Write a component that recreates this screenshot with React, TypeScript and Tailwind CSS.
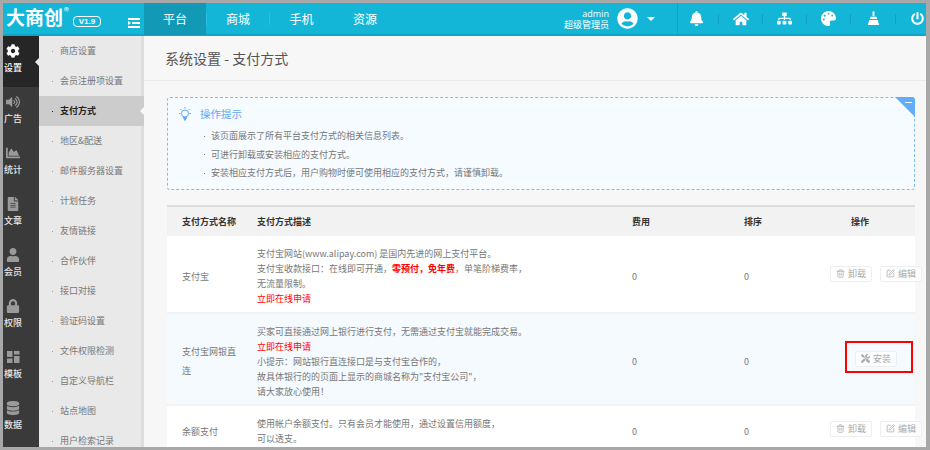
import {
  FaBell,
  FaChartArea,
  FaCog,
  FaDatabase,
  FaFileAlt,
  FaHome,
  FaLock,
  FaPalette,
  FaPowerOff,
  FaSitemap,
  FaTools,
  FaUser,
  FaUserCircle,
  FaVolumeUp,
} from "react-icons/fa";
import { SquarePen, Trash2 } from "lucide-react";
import type { ComponentType, ReactNode } from "react";

function TemplateIcon({ className }: { className?: string }) {
  return (
    <svg viewBox="0 0 14 14" className={`fill-current ${className ?? ""}`}>
      <rect x="1" y="1" width="5.5" height="6" />
      <rect x="8" y="1" width="5.5" height="3.5" />
      <rect x="8" y="6" width="5.5" height="7" />
      <rect x="1" y="8.5" width="5.5" height="4.5" />
    </svg>
  );
}

const sideItems: { label: string; icon: ComponentType<{ className?: string }> }[] = [
  { label: "设置", icon: FaCog },
  { label: "广告", icon: FaVolumeUp },
  { label: "统计", icon: FaChartArea },
  { label: "文章", icon: FaFileAlt },
  { label: "会员", icon: FaUser },
  { label: "权限", icon: FaLock },
  { label: "模板", icon: TemplateIcon },
  { label: "数据", icon: FaDatabase },
];

const subItems = [
  "商店设置",
  "会员注册项设置",
  "支付方式",
  "地区&配送",
  "邮件服务器设置",
  "计划任务",
  "友情链接",
  "合作伙伴",
  "接口对接",
  "验证码设置",
  "文件权限检测",
  "自定义导航栏",
  "站点地图",
  "用户检索记录",
];

const tips = [
  "该页面展示了所有平台支付方式的相关信息列表。",
  "可进行卸载或安装相应的支付方式。",
  "安装相应支付方式后，用户购物时便可使用相应的支付方式，请谨慎卸载。",
];

function Broom() {
  return (
    <svg viewBox="0 0 16 16" className="h-[15px] w-[15px] fill-white">
      <rect x="7" y="0.5" width="2" height="5" />
      <path d="M5 6h6l1 2.5H4z" />
      <path d="M3.5 9.5h9l1.5 5.5H2z" />
    </svg>
  );
}

function TipBulb() {
  return (
    <svg viewBox="0 0 16 16" fill="none" stroke="#62a8f2" strokeWidth="1" className="h-[16px] w-[16px] shrink-0">
      <circle cx="8" cy="7.5" r="3.5" />
      <path d="M8 1v1.5M2 7.5h1.5M12.5 7.5H14M3.6 3.1l1.1 1.1M12.4 3.1l-1.1 1.1" />
      <path d="M6.3 11.5h3.4L8 14.5z" fill="#62a8f2" />
    </svg>
  );
}

function ActionButton({ icon, label }: { icon: ReactNode; label: string }) {
  return (
    <span className="flex h-[16px] w-[42px] shrink-0 items-center justify-center gap-[3px] rounded-[2px] border border-[#eeeeee] bg-white/60 text-[9px] text-[#aaaaaa]">
      {icon}
      {label}
    </span>
  );
}

function PayRow({
  name,
  children,
  action,
  className,
}: {
  name: string;
  children: ReactNode;
  action: ReactNode;
  className: string;
}) {
  return (
    <div className={`grid grid-cols-[90px_375px_112px_86px_85px] items-center pt-[4px] text-[9px] leading-[15px] text-[#777777] ${className}`}>
      <div className="pl-[15px] pr-[20px] leading-[19px]">{name}</div>
      <div>{children}</div>
      <div>0</div>
      <div>0</div>
      {action}
    </div>
  );
}

const uninstallActions = (
  <div className="mb-[5px] flex gap-[8px]">
    <ActionButton icon={<Trash2 className="h-[9px] w-[9px]" />} label="卸载" />
    <ActionButton icon={<SquarePen className="h-[9px] w-[9px]" />} label="编辑" />
  </div>
);

export default function App() {
  return (
    <div
      className="flex h-[450px] w-[930px] flex-col overflow-hidden border-b-[3px] border-l-[3px] border-r-[4px] border-t-[3px] border-[#a8a8a8] bg-[#f7f7f7]"
      style={{ fontFamily: '"Noto Sans CJK SC", "Liberation Sans", sans-serif' }}
    >
      {/* top bar */}
      <header className="flex h-[33px] shrink-0 border-b-2 border-[#10a5c6] bg-[#14b6d8] text-white">
        <div className="flex w-[141px] shrink-0 items-start pl-[3px] pr-[4px] pt-[2px]">
          <span className="text-[19px] font-bold leading-[24px]">大商创</span>
          <span className="ml-px mt-[1px] text-[10px] leading-none">®</span>
          <span className="ml-[4px] mt-[11px] rounded-[4px] border border-white px-[5px] text-[8px] font-bold leading-[9px]" style={{ fontFamily: '"Liberation Sans", sans-serif' }}>
            V1.9
          </span>
          <svg viewBox="0 0 12 10" className="ml-auto mt-[13px] h-[10px] w-[12px] shrink-0 fill-white">
            <rect x="0" y="0" width="12" height="2" />
            <rect x="4" y="4" width="8" height="2" />
            <rect x="0" y="8" width="12" height="2" />
            <path d="M0 3l3 2-3 2z" />
          </svg>
        </div>
        <nav className="flex text-[12px]">
          <div className="flex h-[32px] w-[62px] items-center justify-center bg-[#1199b6]">平台</div>
          <div className="flex h-[32px] w-[64px] items-center justify-center">
            <span className="mr-auto h-[12px] w-px bg-[#2fc0de]" />
            <span className="mr-auto">商城</span>
            <span className="h-[12px] w-px bg-[#2fc0de]" />
          </div>
          <div className="flex h-[32px] w-[63px] items-center justify-center">手机</div>
          <div className="flex h-[32px] w-[64px] items-center justify-center">资源</div>
        </nav>
        <div className="ml-auto flex items-center">
          <div className="text-right text-[9px] leading-[11px]">
            <div style={{ fontFamily: '"Open Sans", sans-serif' }}>admin</div>
            <div>超级管理员</div>
          </div>
          <FaUserCircle className="ml-[8px] h-[21px] w-[21px]" />
          <span className="ml-[9px] h-0 w-0 border-x-[4px] border-t-[4px] border-x-transparent border-t-white" />
          <div className="ml-[22px] flex h-full items-center border-l border-[#10a5c6] text-[15px]">
            <span className="flex w-[40px] justify-center pr-[4px]"><FaBell /></span>
            <span className="h-[10px] w-px bg-[#10a0c0]" />
            <span className="flex w-[43px] justify-center"><FaHome className="text-[16px]" /></span>
            <span className="h-[10px] w-px bg-[#10a0c0]" />
            <span className="flex w-[43px] justify-center"><FaSitemap /></span>
            <span className="h-[10px] w-px bg-[#10a0c0]" />
            <span className="flex w-[43px] justify-center"><FaPalette /></span>
            <span className="h-[10px] w-px bg-[#10a0c0]" />
            <span className="flex w-[44px] justify-center"><Broom /></span>
            <span className="h-[10px] w-px bg-[#10a0c0]" />
            <span className="flex w-[30px] justify-end pr-[2px]"><FaPowerOff className="text-[13px]" /></span>
          </div>
        </div>
      </header>

      <div className="flex min-h-0 flex-1">
        {/* icon rail */}
        <aside className="w-[36px] shrink-0 bg-[#3a3a3a]">
          {sideItems.map((item, i) => {
            const Icon = item.icon;
            return (
              <div
                key={item.label}
                className={`relative h-[51px] pl-px pt-[8px] text-[9px] font-medium leading-[14px] ${i === 0 ? "bg-[#262626] text-white" : "text-[#e6e6e6]"}`}
              >
                <div className="flex w-[18px] flex-col items-center">
                  <Icon className={`mb-[3px] h-[14px] w-[14px] ${i === 0 ? "text-white" : "text-[#9a9a9a]"}`} />
                  {item.label}
                </div>
                {i === 0 && (
                  <span className="absolute right-0 top-[22px] h-0 w-0 border-y-[4px] border-r-[4px] border-y-transparent border-r-[#e8e8e8]" />
                )}
              </div>
            );
          })}
        </aside>

        {/* sub menu */}
        <aside className="w-[105px] shrink-0 border-r-[3px] border-[#dddddd] bg-[#e9e9e9]">
          {subItems.map((label) => {
            const active = label === "支付方式";
            return (
              <div
                key={label}
                className={`relative flex h-[30px] w-[105px] shrink-0 items-center pl-[13px] text-[9px] ${active ? "bg-[#cccccc] font-bold text-[#222222]" : "text-[#777777]"}`}
              >
                <span className={`mr-[7px] h-[1px] w-[1px] ${active ? "bg-[#222222]" : "bg-[#999999]"}`} />
                {label}
                {active && (
                  <span className="absolute right-0 top-[11px] h-0 w-0 border-y-[4px] border-r-[4px] border-y-transparent border-r-[#f7f7f7]" />
                )}
              </div>
            );
          })}
        </aside>

        {/* page */}
        <main className="relative min-w-0 flex-1">
          <div className="flex h-[45px] items-center border-b border-[#ebebeb] pl-[21px] pt-[1px] text-[14px] text-[#555555]">
            系统设置 - 支付方式
          </div>

          <section className="relative ml-[23px] mt-[16px] h-[93px] w-[748px] rounded-[3px] border border-dashed border-[#7fbef5] bg-[#f6fbff] pl-[9px] pt-[7px]">
            <div className="flex h-[18px] items-center text-[10.5px] text-[#62a8f2]">
              <TipBulb />
              <span className="ml-[7px]">操作提示</span>
            </div>
            <ul className="ml-[27px] mt-[4px] text-[9px] leading-[18.5px] text-[#777777]">
              {tips.map((tip) => (
                <li key={tip} className="flex items-center">
                  <span className="mr-[6px] h-[1px] w-[1px] bg-[#777777]" />
                  {tip}
                </li>
              ))}
            </ul>
            <span className="absolute -right-px -top-px h-[20px] w-[20px] rounded-tr-[3px] bg-[#62acf8] [clip-path:polygon(0_0,100%_0,100%_100%)]">
              <span className="absolute right-[3px] top-[5px] h-px w-[7px] bg-white" />
            </span>
          </section>

          <section className="ml-[23px] mt-[15px] w-[748px]">
            <div className="grid h-[31px] grid-cols-[90px_375px_112px_86px_85px] items-center border-t-2 border-[#dddddd] bg-[#f2f2f2] text-[9px] font-bold text-[#333333]">
              <div className="whitespace-nowrap pl-[15px]">支付方式名称</div>
              <div>支付方式描述</div>
              <div>费用</div>
              <div>排序</div>
              <div className="pl-[21px]">操作</div>
            </div>

            <PayRow name="支付宝" className="h-[78px] border-b-2 border-[#f2f2f2] bg-white" action={uninstallActions}>
              <div>支付宝网站(www.alipay.com) 是国内先进的网上支付平台。</div>
              <div>
                支付宝收款接口：在线即可开通，<b className="text-[#ff0000]">零预付，免年费</b>，单笔阶梯费率，
              </div>
              <div>无流量限制。</div>
              <div className="text-[#ff0000]">立即在线申请</div>
            </PayRow>

            <PayRow
              name="支付宝网银直连"
              className="h-[92px] border-b-2 border-[#f2f2f2] bg-[#f5fafe]"
              action={
                <div className="mb-[5px] pl-[25px]">
                  <ActionButton icon={<FaTools className="h-[9px] w-[9px]" />} label="安装" />
                </div>
              }
            >
              <div>买家可直接通过网上银行进行支付，无需通过支付宝就能完成交易。</div>
              <div className="text-[#ff0000]">立即在线申请</div>
              <div>小提示：网站银行直连接口是与支付宝合作的，</div>
              <div>故具体银行的的页面上显示的商城名称为"支付宝公司"，</div>
              <div>请大家放心使用！</div>
            </PayRow>

            <PayRow name="余额支付" className="h-[46px] bg-white" action={uninstallActions}>
              <div>使用帐户余额支付。只有会员才能使用，通过设置信用额度，</div>
              <div>可以透支。</div>
            </PayRow>
          </section>

          {/* red annotation round the install button */}
          <div className="absolute left-[701px] top-[305px] h-[32px] w-[68px] border-2 border-[#ff0000]" />
        </main>
      </div>
    </div>
  );
}
